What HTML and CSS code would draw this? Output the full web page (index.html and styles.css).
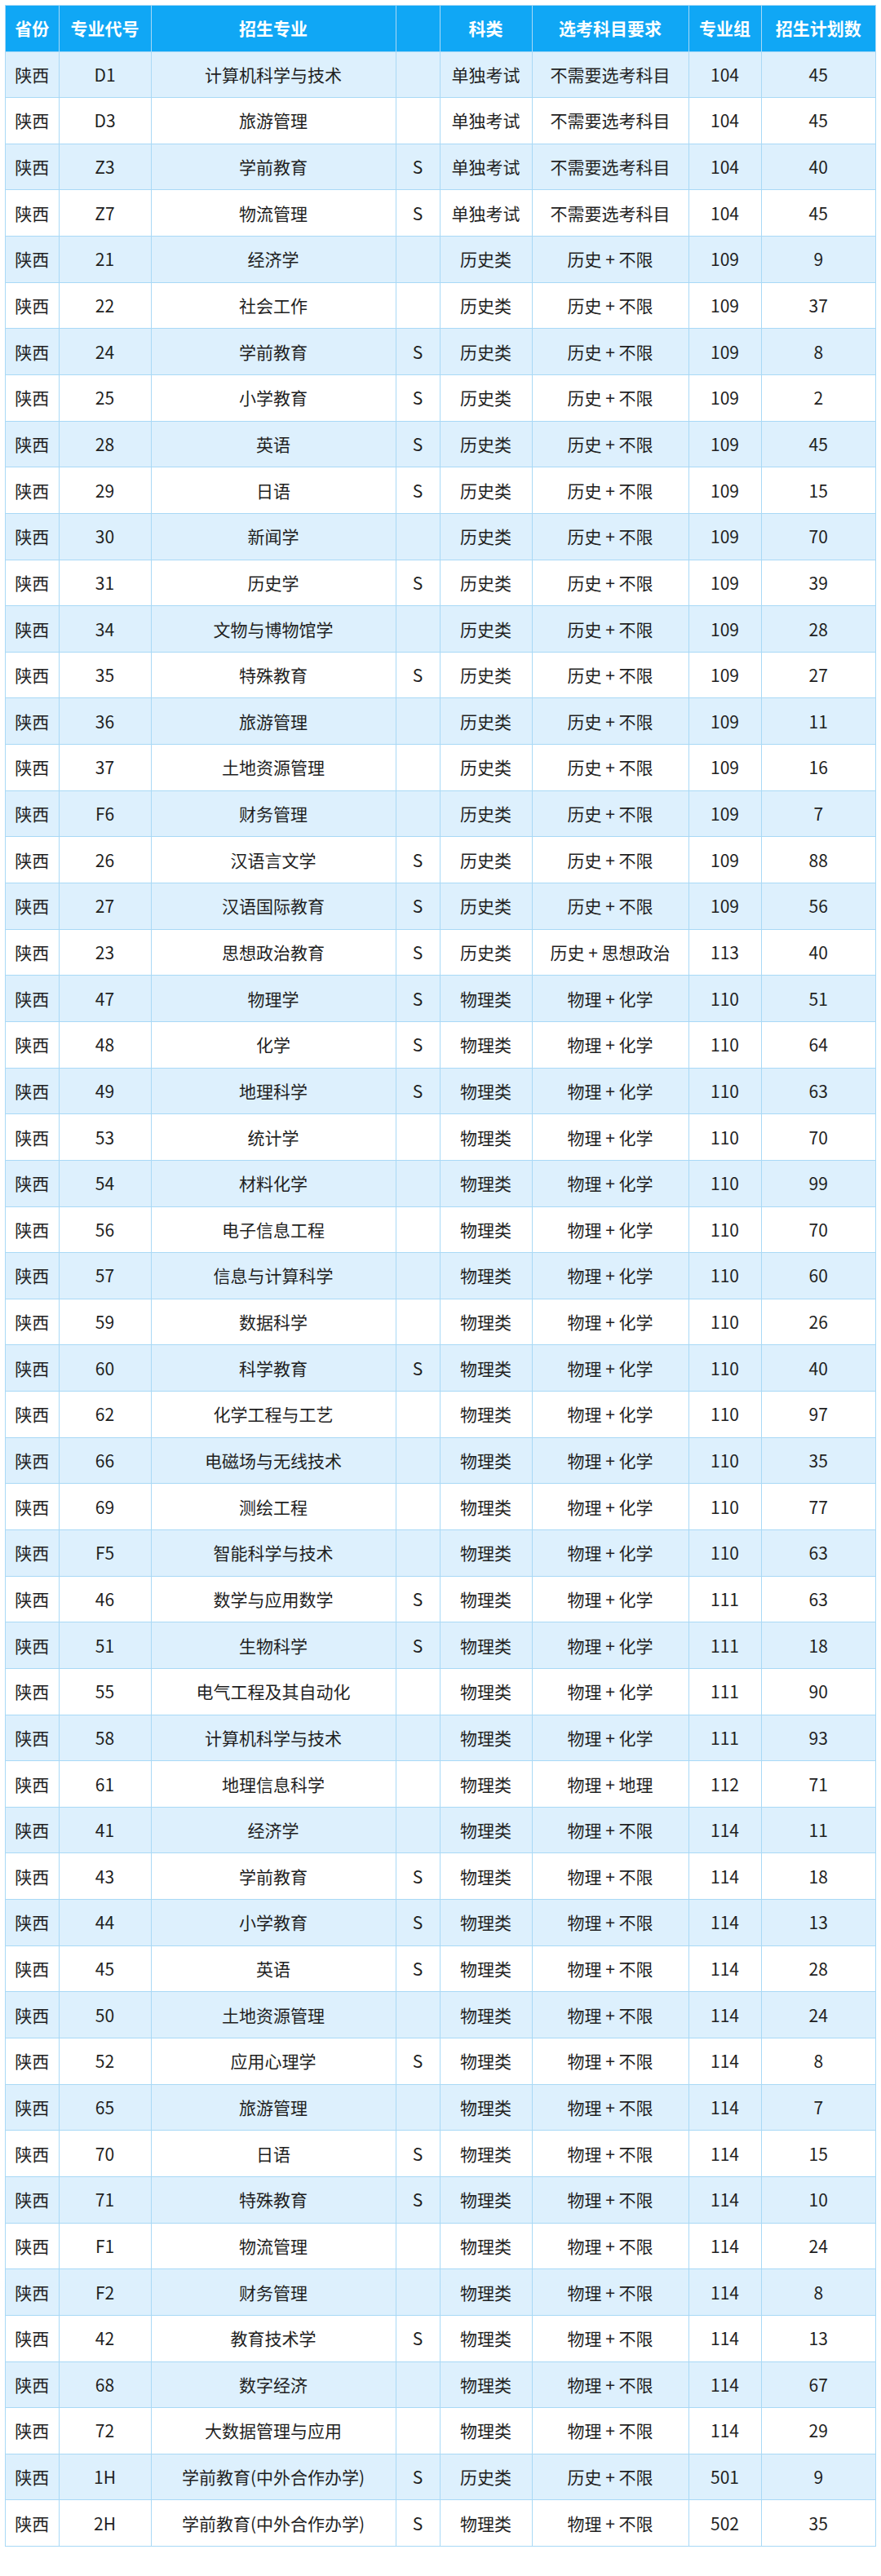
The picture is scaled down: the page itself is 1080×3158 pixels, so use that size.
FILE: index.html
```html
<!DOCTYPE html>
<html lang="zh-CN">
<head>
<meta charset="utf-8">
<link rel="stylesheet" href="styles.css">
</head>
<body>
<table class="plan">
<colgroup>
<col class="c1"><col class="c2"><col class="c3"><col class="c4"><col class="c5"><col class="c6"><col class="c7"><col class="c8">
</colgroup>
<thead>
<tr><th>省份</th><th>专业代号</th><th>招生专业</th><th></th><th>科类</th><th>选考科目要求</th><th>专业组</th><th>招生计划数</th></tr>
</thead>
<tbody>
<tr><td>陕西</td><td>D1</td><td>计算机科学与技术</td><td></td><td>单独考试</td><td>不需要选考科目</td><td>104</td><td>45</td></tr>
<tr><td>陕西</td><td>D3</td><td>旅游管理</td><td></td><td>单独考试</td><td>不需要选考科目</td><td>104</td><td>45</td></tr>
<tr><td>陕西</td><td>Z3</td><td>学前教育</td><td>S</td><td>单独考试</td><td>不需要选考科目</td><td>104</td><td>40</td></tr>
<tr><td>陕西</td><td>Z7</td><td>物流管理</td><td>S</td><td>单独考试</td><td>不需要选考科目</td><td>104</td><td>45</td></tr>
<tr><td>陕西</td><td>21</td><td>经济学</td><td></td><td>历史类</td><td>历史 + 不限</td><td>109</td><td>9</td></tr>
<tr><td>陕西</td><td>22</td><td>社会工作</td><td></td><td>历史类</td><td>历史 + 不限</td><td>109</td><td>37</td></tr>
<tr><td>陕西</td><td>24</td><td>学前教育</td><td>S</td><td>历史类</td><td>历史 + 不限</td><td>109</td><td>8</td></tr>
<tr><td>陕西</td><td>25</td><td>小学教育</td><td>S</td><td>历史类</td><td>历史 + 不限</td><td>109</td><td>2</td></tr>
<tr><td>陕西</td><td>28</td><td>英语</td><td>S</td><td>历史类</td><td>历史 + 不限</td><td>109</td><td>45</td></tr>
<tr><td>陕西</td><td>29</td><td>日语</td><td>S</td><td>历史类</td><td>历史 + 不限</td><td>109</td><td>15</td></tr>
<tr><td>陕西</td><td>30</td><td>新闻学</td><td></td><td>历史类</td><td>历史 + 不限</td><td>109</td><td>70</td></tr>
<tr><td>陕西</td><td>31</td><td>历史学</td><td>S</td><td>历史类</td><td>历史 + 不限</td><td>109</td><td>39</td></tr>
<tr><td>陕西</td><td>34</td><td>文物与博物馆学</td><td></td><td>历史类</td><td>历史 + 不限</td><td>109</td><td>28</td></tr>
<tr><td>陕西</td><td>35</td><td>特殊教育</td><td>S</td><td>历史类</td><td>历史 + 不限</td><td>109</td><td>27</td></tr>
<tr><td>陕西</td><td>36</td><td>旅游管理</td><td></td><td>历史类</td><td>历史 + 不限</td><td>109</td><td>11</td></tr>
<tr><td>陕西</td><td>37</td><td>土地资源管理</td><td></td><td>历史类</td><td>历史 + 不限</td><td>109</td><td>16</td></tr>
<tr><td>陕西</td><td>F6</td><td>财务管理</td><td></td><td>历史类</td><td>历史 + 不限</td><td>109</td><td>7</td></tr>
<tr><td>陕西</td><td>26</td><td>汉语言文学</td><td>S</td><td>历史类</td><td>历史 + 不限</td><td>109</td><td>88</td></tr>
<tr><td>陕西</td><td>27</td><td>汉语国际教育</td><td>S</td><td>历史类</td><td>历史 + 不限</td><td>109</td><td>56</td></tr>
<tr><td>陕西</td><td>23</td><td>思想政治教育</td><td>S</td><td>历史类</td><td>历史 + 思想政治</td><td>113</td><td>40</td></tr>
<tr><td>陕西</td><td>47</td><td>物理学</td><td>S</td><td>物理类</td><td>物理 + 化学</td><td>110</td><td>51</td></tr>
<tr><td>陕西</td><td>48</td><td>化学</td><td>S</td><td>物理类</td><td>物理 + 化学</td><td>110</td><td>64</td></tr>
<tr><td>陕西</td><td>49</td><td>地理科学</td><td>S</td><td>物理类</td><td>物理 + 化学</td><td>110</td><td>63</td></tr>
<tr><td>陕西</td><td>53</td><td>统计学</td><td></td><td>物理类</td><td>物理 + 化学</td><td>110</td><td>70</td></tr>
<tr><td>陕西</td><td>54</td><td>材料化学</td><td></td><td>物理类</td><td>物理 + 化学</td><td>110</td><td>99</td></tr>
<tr><td>陕西</td><td>56</td><td>电子信息工程</td><td></td><td>物理类</td><td>物理 + 化学</td><td>110</td><td>70</td></tr>
<tr><td>陕西</td><td>57</td><td>信息与计算科学</td><td></td><td>物理类</td><td>物理 + 化学</td><td>110</td><td>60</td></tr>
<tr><td>陕西</td><td>59</td><td>数据科学</td><td></td><td>物理类</td><td>物理 + 化学</td><td>110</td><td>26</td></tr>
<tr><td>陕西</td><td>60</td><td>科学教育</td><td>S</td><td>物理类</td><td>物理 + 化学</td><td>110</td><td>40</td></tr>
<tr><td>陕西</td><td>62</td><td>化学工程与工艺</td><td></td><td>物理类</td><td>物理 + 化学</td><td>110</td><td>97</td></tr>
<tr><td>陕西</td><td>66</td><td>电磁场与无线技术</td><td></td><td>物理类</td><td>物理 + 化学</td><td>110</td><td>35</td></tr>
<tr><td>陕西</td><td>69</td><td>测绘工程</td><td></td><td>物理类</td><td>物理 + 化学</td><td>110</td><td>77</td></tr>
<tr><td>陕西</td><td>F5</td><td>智能科学与技术</td><td></td><td>物理类</td><td>物理 + 化学</td><td>110</td><td>63</td></tr>
<tr><td>陕西</td><td>46</td><td>数学与应用数学</td><td>S</td><td>物理类</td><td>物理 + 化学</td><td>111</td><td>63</td></tr>
<tr><td>陕西</td><td>51</td><td>生物科学</td><td>S</td><td>物理类</td><td>物理 + 化学</td><td>111</td><td>18</td></tr>
<tr><td>陕西</td><td>55</td><td>电气工程及其自动化</td><td></td><td>物理类</td><td>物理 + 化学</td><td>111</td><td>90</td></tr>
<tr><td>陕西</td><td>58</td><td>计算机科学与技术</td><td></td><td>物理类</td><td>物理 + 化学</td><td>111</td><td>93</td></tr>
<tr><td>陕西</td><td>61</td><td>地理信息科学</td><td></td><td>物理类</td><td>物理 + 地理</td><td>112</td><td>71</td></tr>
<tr><td>陕西</td><td>41</td><td>经济学</td><td></td><td>物理类</td><td>物理 + 不限</td><td>114</td><td>11</td></tr>
<tr><td>陕西</td><td>43</td><td>学前教育</td><td>S</td><td>物理类</td><td>物理 + 不限</td><td>114</td><td>18</td></tr>
<tr><td>陕西</td><td>44</td><td>小学教育</td><td>S</td><td>物理类</td><td>物理 + 不限</td><td>114</td><td>13</td></tr>
<tr><td>陕西</td><td>45</td><td>英语</td><td>S</td><td>物理类</td><td>物理 + 不限</td><td>114</td><td>28</td></tr>
<tr><td>陕西</td><td>50</td><td>土地资源管理</td><td></td><td>物理类</td><td>物理 + 不限</td><td>114</td><td>24</td></tr>
<tr><td>陕西</td><td>52</td><td>应用心理学</td><td>S</td><td>物理类</td><td>物理 + 不限</td><td>114</td><td>8</td></tr>
<tr><td>陕西</td><td>65</td><td>旅游管理</td><td></td><td>物理类</td><td>物理 + 不限</td><td>114</td><td>7</td></tr>
<tr><td>陕西</td><td>70</td><td>日语</td><td>S</td><td>物理类</td><td>物理 + 不限</td><td>114</td><td>15</td></tr>
<tr><td>陕西</td><td>71</td><td>特殊教育</td><td>S</td><td>物理类</td><td>物理 + 不限</td><td>114</td><td>10</td></tr>
<tr><td>陕西</td><td>F1</td><td>物流管理</td><td></td><td>物理类</td><td>物理 + 不限</td><td>114</td><td>24</td></tr>
<tr><td>陕西</td><td>F2</td><td>财务管理</td><td></td><td>物理类</td><td>物理 + 不限</td><td>114</td><td>8</td></tr>
<tr><td>陕西</td><td>42</td><td>教育技术学</td><td>S</td><td>物理类</td><td>物理 + 不限</td><td>114</td><td>13</td></tr>
<tr><td>陕西</td><td>68</td><td>数字经济</td><td></td><td>物理类</td><td>物理 + 不限</td><td>114</td><td>67</td></tr>
<tr><td>陕西</td><td>72</td><td>大数据管理与应用</td><td></td><td>物理类</td><td>物理 + 不限</td><td>114</td><td>29</td></tr>
<tr><td>陕西</td><td>1H</td><td>学前教育(中外合作办学)</td><td>S</td><td>历史类</td><td>历史 + 不限</td><td>501</td><td>9</td></tr>
<tr><td>陕西</td><td>2H</td><td>学前教育(中外合作办学)</td><td>S</td><td>物理类</td><td>物理 + 不限</td><td>502</td><td>35</td></tr>
</tbody>
</table>
</body>
</html>
```

FILE: styles.css
```css
html, body {
  margin: 0;
  padding: 0;
  background: #ffffff;
}

body {
  padding: 6px 0 0 6px;
  font-family: "Noto Sans CJK SC", "Noto Sans", sans-serif;
  color: #1f1f1f;
}

.plan {
  border-collapse: collapse;
  table-layout: fixed;
  width: 1067px;
}

.c1 { width: 65.5px; }
.c2 { width: 113px; }
.c3 { width: 300px; }
.c4 { width: 54px; }
.c5 { width: 113px; }
.c6 { width: 192px; }
.c7 { width: 89px; }
.c8 { width: 140.5px; }

.plan th,
.plan td {
  border: 1.5px solid #a9d9f6;
  text-align: center;
  vertical-align: middle;
  padding: 0;
  font-size: 21px;
  line-height: 1;
  white-space: nowrap;
}

.plan th {
  height: 55.5px;
  background: #10a7f5;
  color: #ffffff;
  font-weight: 700;
}

.plan td {
  height: 55.65px;
  font-weight: 400;
}

.plan tbody tr:nth-child(odd) td {
  background: #ddf0fd;
}
```
